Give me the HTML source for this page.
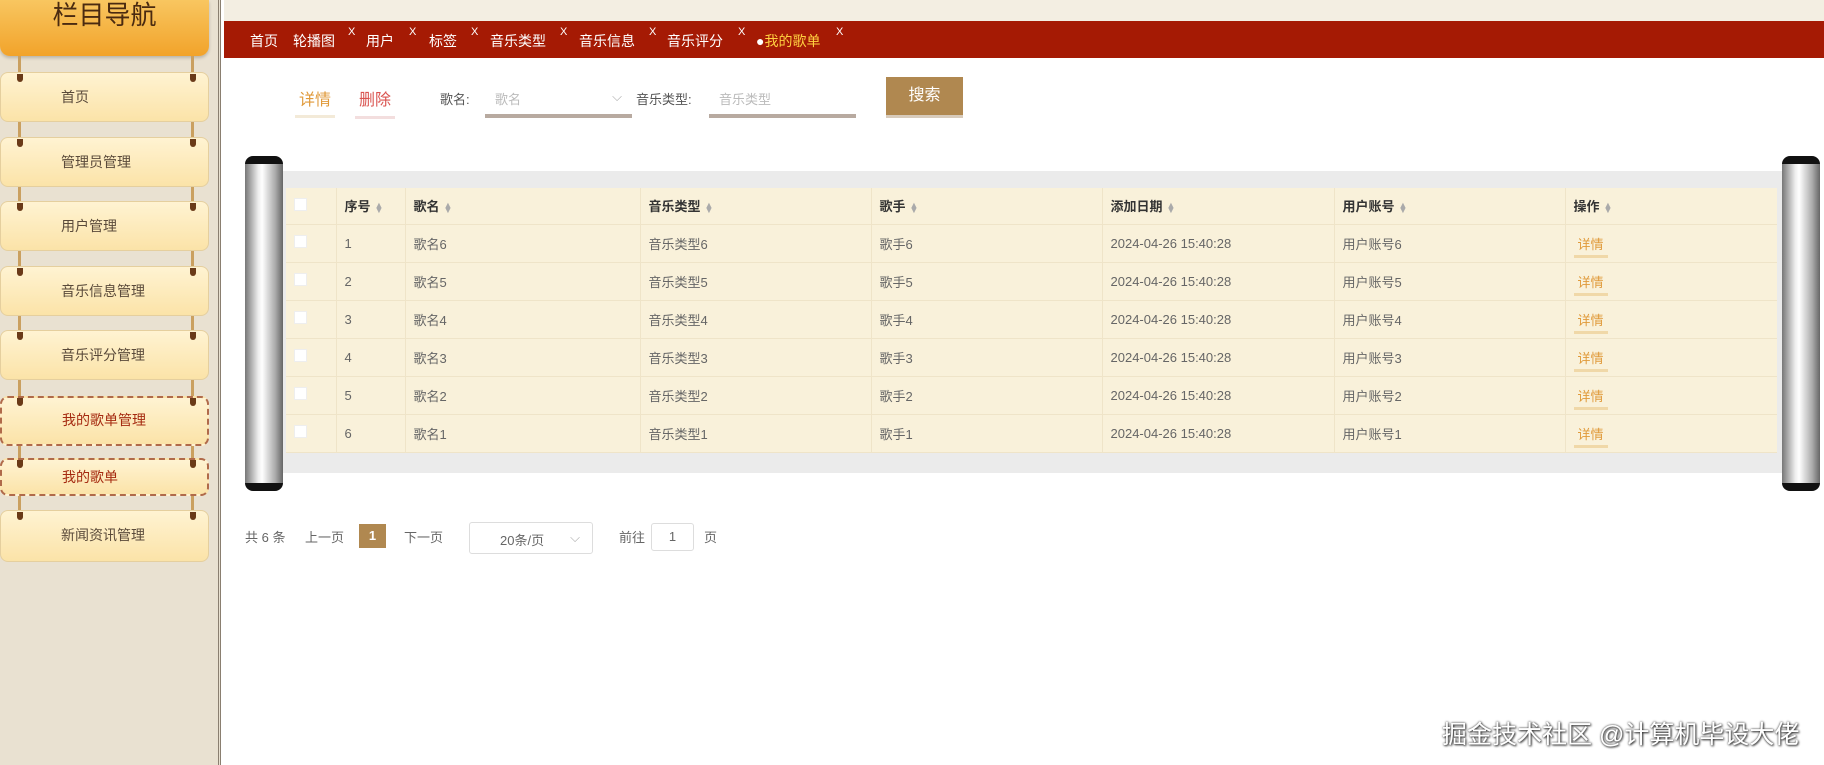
<!DOCTYPE html>
<html><head><meta charset="utf-8"><style>
*{margin:0;padding:0;box-sizing:border-box}
body{width:1824px;height:765px;overflow:hidden;background:#fff;font-family:"Liberation Sans","Noto Sans CJK SC",sans-serif;font-size:14px;color:#555;position:relative}
.abs{position:absolute}
#side{left:0;top:0;width:221px;height:765px;background:#e9e1d1;border-right:3px double #8a7f70}
#title{left:0;top:0;width:209px;height:56px;background:linear-gradient(#f8c660,#f2a32a);border-radius:0 0 10px 10px;color:#4a2a10;font-size:26px;text-align:center;line-height:30px;box-shadow:0 2px 3px rgba(0,0,0,.2)}
.mi{left:0;width:209px;height:50px;background:linear-gradient(#fff3d2,#fbe3a8);border-radius:8px;border:1px solid #e5cf9e;color:#5a4a3a;font-size:14px;line-height:48px;padding-left:60px}
.mi.act{border:2px dashed #b06a4a;color:#a52a10}
.hk{width:6px;height:8px;background:#6a3a18;border-radius:0 0 4px 4px}
.st{width:3px;background:#caa060}
#topbg{left:224px;top:0;width:1600px;height:21px;background:#f3eee2}
#bar{left:224px;top:21px;width:1600px;height:37px;background:#a51a04;color:#fff;font-size:14px}
#bar span{position:absolute;top:10px}
#bar .x{font-size:11px;top:5px}
.tb{color:#555;font-size:14px}
.roll{width:38px;border-radius:8px;background:linear-gradient(90deg,#777,#eee 35%,#fff 45%,#aaa 80%,#666);border-top:8px solid #111;border-bottom:8px solid #111}
table{border-collapse:collapse;font-size:13px;color:#666}
td,th{height:38px;border-right:1px solid #efe4c8;border-bottom:1px solid #efe4c8;text-align:left;padding-left:8px}
th{height:36px;color:#333;font-weight:bold}
.sort{display:inline-block;color:#aaa;font-size:9px;line-height:5px;vertical-align:middle;margin-left:4px}
.cb{display:inline-block;width:13px;height:13px;background:#fff;border:1px solid #eee}
.dt{color:#e09a3a;border-bottom:3px solid #f0d8a8;padding:0 4px 3px}
</style></head><body>
<div id="side" class="abs"></div>
<div id="title" class="abs">栏目导航</div>
<div class="abs mi" style="top:72px">首页</div>
<div class="abs mi" style="top:137px">管理员管理</div>
<div class="abs mi" style="top:201px">用户管理</div>
<div class="abs mi" style="top:266px">音乐信息管理</div>
<div class="abs mi" style="top:330px">音乐评分管理</div>
<div class="abs mi act" style="top:396px;height:50px;line-height:44px">我的歌单管理</div>
<div class="abs mi act" style="top:458px;height:38px;line-height:34px">我的歌单</div>
<div class="abs mi" style="top:510px;height:52px">新闻资讯管理</div>
<div class="abs st" style="left:18px;top:56px;height:16px"></div><div class="abs st" style="left:191px;top:56px;height:16px"></div>
<div class="abs st" style="left:18px;top:122px;height:15px"></div><div class="abs st" style="left:191px;top:122px;height:15px"></div>
<div class="abs st" style="left:18px;top:187px;height:14px"></div><div class="abs st" style="left:191px;top:187px;height:14px"></div>
<div class="abs st" style="left:18px;top:251px;height:15px"></div><div class="abs st" style="left:191px;top:251px;height:15px"></div>
<div class="abs st" style="left:18px;top:316px;height:14px"></div><div class="abs st" style="left:191px;top:316px;height:14px"></div>
<div class="abs st" style="left:18px;top:380px;height:16px"></div><div class="abs st" style="left:191px;top:380px;height:16px"></div>
<div class="abs st" style="left:18px;top:446px;height:12px"></div><div class="abs st" style="left:191px;top:446px;height:12px"></div>
<div class="abs st" style="left:18px;top:496px;height:14px"></div><div class="abs st" style="left:191px;top:496px;height:14px"></div>
<div class="abs hk" style="left:17px;top:74px"></div><div class="abs hk" style="left:190px;top:74px"></div>
<div class="abs hk" style="left:17px;top:139px"></div><div class="abs hk" style="left:190px;top:139px"></div>
<div class="abs hk" style="left:17px;top:203px"></div><div class="abs hk" style="left:190px;top:203px"></div>
<div class="abs hk" style="left:17px;top:268px"></div><div class="abs hk" style="left:190px;top:268px"></div>
<div class="abs hk" style="left:17px;top:332px"></div><div class="abs hk" style="left:190px;top:332px"></div>
<div class="abs hk" style="left:17px;top:398px"></div><div class="abs hk" style="left:190px;top:398px"></div>
<div class="abs hk" style="left:17px;top:460px"></div><div class="abs hk" style="left:190px;top:460px"></div>
<div class="abs hk" style="left:17px;top:512px"></div><div class="abs hk" style="left:190px;top:512px"></div>

<div id="topbg" class="abs"></div>
<div id="bar" class="abs">
<span style="left:26px">首页</span>
<span style="left:69px">轮播图</span><span class="x" style="left:124px">X</span>
<span style="left:142px">用户</span><span class="x" style="left:185px">X</span>
<span style="left:205px">标签</span><span class="x" style="left:247px">X</span>
<span style="left:266px">音乐类型</span><span class="x" style="left:336px">X</span>
<span style="left:355px">音乐信息</span><span class="x" style="left:425px">X</span>
<span style="left:443px">音乐评分</span><span class="x" style="left:514px">X</span>
<span style="left:532px;color:#ffd040"><span style="position:static;color:#fff">●</span>我的歌单</span><span class="x" style="left:612px">X</span>
</div>

<div class="abs" style="left:295px;top:86px;font-size:16px"><span class="dt" style="padding:0 4px 6px;border-bottom-color:#f3ead8">详情</span></div>
<div class="abs" style="left:355px;top:86px;font-size:16px;color:#d9534f;border-bottom:3px solid #f3dede;padding:0 4px 6px">删除</div>
<div class="abs tb" style="left:440px;top:89px;font-size:13px">歌名:</div>
<div class="abs" style="left:485px;top:86px;width:147px;height:32px;border-bottom:4px solid #b8aaa0;color:#bbb;font-size:13px;padding:3px 10px">歌名<span style="position:absolute;right:10px;color:#aaa">⌵</span></div>
<div class="abs tb" style="left:636px;top:89px;font-size:13px">音乐类型:</div>
<div class="abs" style="left:709px;top:86px;width:147px;height:32px;border-bottom:4px solid #b8aaa0;color:#bbb;font-size:13px;padding:3px 10px">音乐类型</div>
<div class="abs" style="left:886px;top:77px;width:77px;height:41px;background:#b08850;border-bottom:3px solid #d8cbbb;color:#fff;font-size:16px;text-align:center;line-height:38px">搜索</div>

<div class="abs" style="left:283px;top:171px;width:1499px;height:302px;background:#ebebeb"></div>
<div class="abs roll" style="left:245px;top:156px;height:335px"></div>
<div class="abs roll" style="left:1782px;top:156px;height:335px"></div>
<div class="abs" style="left:286px;top:188px;width:1491px;background:#f9f1da">
<table style="width:1491px">
<tr><th style="width:50px"><span class="cb"></span></th><th style="width:69px">序号<span class="sort">▲<br>▼</span></th><th style="width:235px">歌名<span class="sort">▲<br>▼</span></th><th style="width:231px">音乐类型<span class="sort">▲<br>▼</span></th><th style="width:231px">歌手<span class="sort">▲<br>▼</span></th><th style="width:232px">添加日期<span class="sort">▲<br>▼</span></th><th style="width:231px">用户账号<span class="sort">▲<br>▼</span></th><th style="border-right:none">操作<span class="sort">▲<br>▼</span></th></tr>
<tr><td><span class="cb"></span></td><td>1</td><td>歌名6</td><td>音乐类型6</td><td>歌手6</td><td>2024-04-26 15:40:28</td><td>用户账号6</td><td style="border-right:none"><span class="dt">详情</span></td></tr>
<tr><td><span class="cb"></span></td><td>2</td><td>歌名5</td><td>音乐类型5</td><td>歌手5</td><td>2024-04-26 15:40:28</td><td>用户账号5</td><td style="border-right:none"><span class="dt">详情</span></td></tr>
<tr><td><span class="cb"></span></td><td>3</td><td>歌名4</td><td>音乐类型4</td><td>歌手4</td><td>2024-04-26 15:40:28</td><td>用户账号4</td><td style="border-right:none"><span class="dt">详情</span></td></tr>
<tr><td><span class="cb"></span></td><td>4</td><td>歌名3</td><td>音乐类型3</td><td>歌手3</td><td>2024-04-26 15:40:28</td><td>用户账号3</td><td style="border-right:none"><span class="dt">详情</span></td></tr>
<tr><td><span class="cb"></span></td><td>5</td><td>歌名2</td><td>音乐类型2</td><td>歌手2</td><td>2024-04-26 15:40:28</td><td>用户账号2</td><td style="border-right:none"><span class="dt">详情</span></td></tr>
<tr><td><span class="cb"></span></td><td>6</td><td>歌名1</td><td>音乐类型1</td><td>歌手1</td><td>2024-04-26 15:40:28</td><td>用户账号1</td><td style="border-right:none"><span class="dt">详情</span></td></tr>
</table></div>

<div class="abs" style="left:245px;top:527px;font-size:13px;color:#666">共 6 条</div>
<div class="abs" style="left:305px;top:527px;font-size:13px;color:#666">上一页</div>
<div class="abs" style="left:359px;top:524px;width:27px;height:24px;background:#b08850;color:#fff;font-size:13px;font-weight:bold;text-align:center;line-height:24px">1</div>
<div class="abs" style="left:404px;top:527px;font-size:13px;color:#666">下一页</div>
<div class="abs" style="left:469px;top:522px;width:124px;height:32px;border:1px solid #ddd;border-radius:3px;font-size:13px;color:#666;padding:7px 0 0 30px">20条/页<span style="position:absolute;right:12px;color:#aaa">⌵</span></div>
<div class="abs" style="left:619px;top:527px;font-size:13px;color:#666">前往</div>
<div class="abs" style="left:651px;top:523px;width:43px;height:28px;border:1px solid #ddd;border-radius:3px;font-size:13px;color:#666;text-align:center;line-height:26px">1</div>
<div class="abs" style="left:704px;top:527px;font-size:13px;color:#666">页</div>

<div class="abs" style="left:1442px;top:715px;font-size:25px;color:#fff;text-shadow:0 0 2px #333,1px 1px 2px #333">掘金技术社区 @计算机毕设大佬</div>
</body></html>
